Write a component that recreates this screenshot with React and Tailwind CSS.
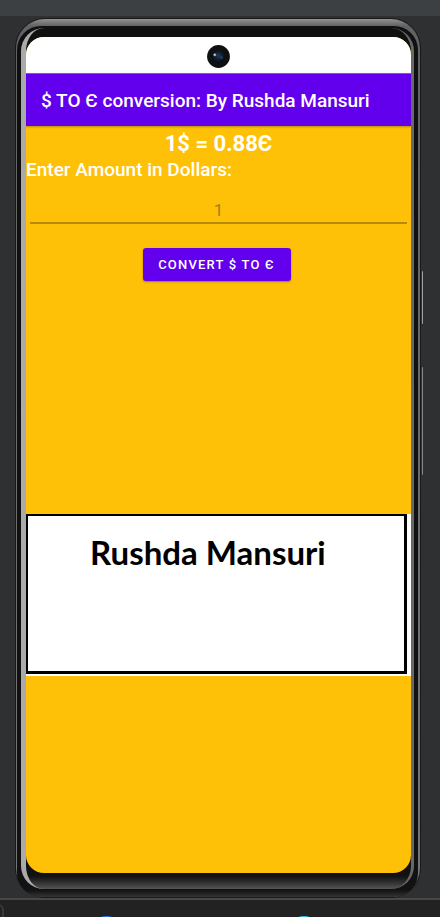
import { useState } from "react";

function Camera() {
  return (
    <svg className="h-6 w-6" viewBox="0 0 24 24" aria-hidden="true">
      <defs>
        <radialGradient id="lens" cx="50%" cy="45%" r="50%">
          <stop offset="0" stopColor="#1d3f5f" />
          <stop offset="0.45" stopColor="#132334" />
          <stop offset="1" stopColor="#0c0e11" />
        </radialGradient>
      </defs>
      <circle cx="11.5" cy="11.5" r="11.4" fill="#0e1012" />
      <circle cx="11.5" cy="11.5" r="6.5" fill="url(#lens)" />
      <circle cx="7.8" cy="9.8" r="1.5" fill="#8598ae" />
      <circle cx="7.7" cy="9.7" r="0.7" fill="#d5dfeb" />
      <circle cx="14.5" cy="12.5" r="1.3" fill="#174a7c" />
    </svg>
  );
}

function Screen() {
  const [amount, setAmount] = useState("");
  return (
    <main className="flex flex-1 flex-col overflow-hidden rounded-[18px] bg-[#ffc107]">
      <div className="flex h-9 items-center justify-center bg-white pt-1">
        <Camera />
      </div>
      <header className="z-10 flex h-[53px] items-center border-t border-[#8a4df3] bg-[#6200ee] px-[15px] pt-px shadow-[0_1px_2px_rgba(0,0,0,0.3)]">
        <h1 className="text-[19px] font-medium leading-6 whitespace-nowrap text-white">
          $ TO Є conversion: By Rushda Mansuri
        </h1>
      </header>
      <p className="pt-1 text-center text-[22px] font-bold leading-7 text-white">1$ = 0.88Є</p>
      <label htmlFor="amount" className="text-[19px] font-medium leading-6 text-white">
        Enter Amount in Dollars:
      </label>
      <div className="px-1 pt-3">
        <input
          id="amount"
          type="text"
          inputMode="decimal"
          placeholder="1"
          value={amount}
          onChange={(e) => setAmount(e.target.value)}
          className="block h-[30px] w-full border-b-2 border-[#b78a0c] bg-transparent pt-1 text-center text-[17px] text-black outline-none placeholder:text-[#a67e0c]"
        />
      </div>
      <div className="flex justify-center pt-6 pr-1">
        <button
          type="button"
          className="h-[33px] w-[148px] rounded-[3px] bg-[#6200ee] text-[13px] font-medium tracking-[1.2px] whitespace-nowrap text-white shadow-[0_1px_2px_rgba(0,0,0,0.35)]"
        >
          CONVERT $ TO Є
        </button>
      </div>
      <section className="mt-[233px] bg-white pr-1 pb-0.5">
        <div className="h-40 border-t-2 border-r-[3px] border-b-[3px] border-l-2 border-black px-[62px] pt-4">
          <p className="font-['Lato','Open_Sans',sans-serif] text-[33px] font-bold leading-10 whitespace-nowrap text-black">
            Rushda Mansuri
          </p>
        </div>
      </section>
    </main>
  );
}

export default function App() {
  return (
    <div className="flex min-h-screen flex-col overflow-hidden bg-[#2f3032] font-['Roboto','Liberation_Sans',sans-serif]">
      <div className="h-4 bg-[#3c4043]" />
      <div className="flex flex-1 flex-col pt-0.5 pr-[19px] pl-[15px]">
        <div className="relative flex flex-1 flex-col rounded-[30px] border border-[#191919] bg-[#121212]">
          <div className="absolute top-[252px] -right-[3px] h-[53px] w-0.5 rounded-sm border-r border-[#a0a0a0] bg-[#333]" />
          <div className="absolute top-[348px] -right-[3px] h-[108px] w-0.5 rounded-sm border-r border-[#888] bg-[#333]" />
          <div className="flex flex-1 flex-col rounded-[29px] bg-linear-to-b from-[#929292] via-[#626262] via-[7px] to-[#777] pt-[7px] pr-0.5 pl-px">
            <div className="flex flex-1 flex-col rounded-[24px] bg-linear-to-t from-[#353535] via-[#121212] via-[7px] to-[#101010] pt-0.5 pr-1 pb-2 pl-1">
              <div className="flex flex-1 flex-col rounded-[23px] border-r-[3px] border-l-[5px] border-r-[#686868] border-l-[#aaaaaa] bg-linear-to-t from-[#555] via-[#111] via-[13px] to-[#101010] pt-[9px] pb-4">
                <Screen />
              </div>
            </div>
          </div>
        </div>
      </div>
      <footer className="relative h-[19px] overflow-hidden border-t-2 border-[#484848] bg-[#222222]">
        <div className="absolute top-1 -left-2 h-8 w-3 rounded-md border-2 border-[#383838]" />
        <svg className="h-full w-full" aria-hidden="true">
          <circle cx="24.2%" cy="32" r="16" fill="#2878ef" />
          <circle cx="69.1%" cy="32" r="16" fill="#31c2e4" />
        </svg>
      </footer>
    </div>
  );
}
